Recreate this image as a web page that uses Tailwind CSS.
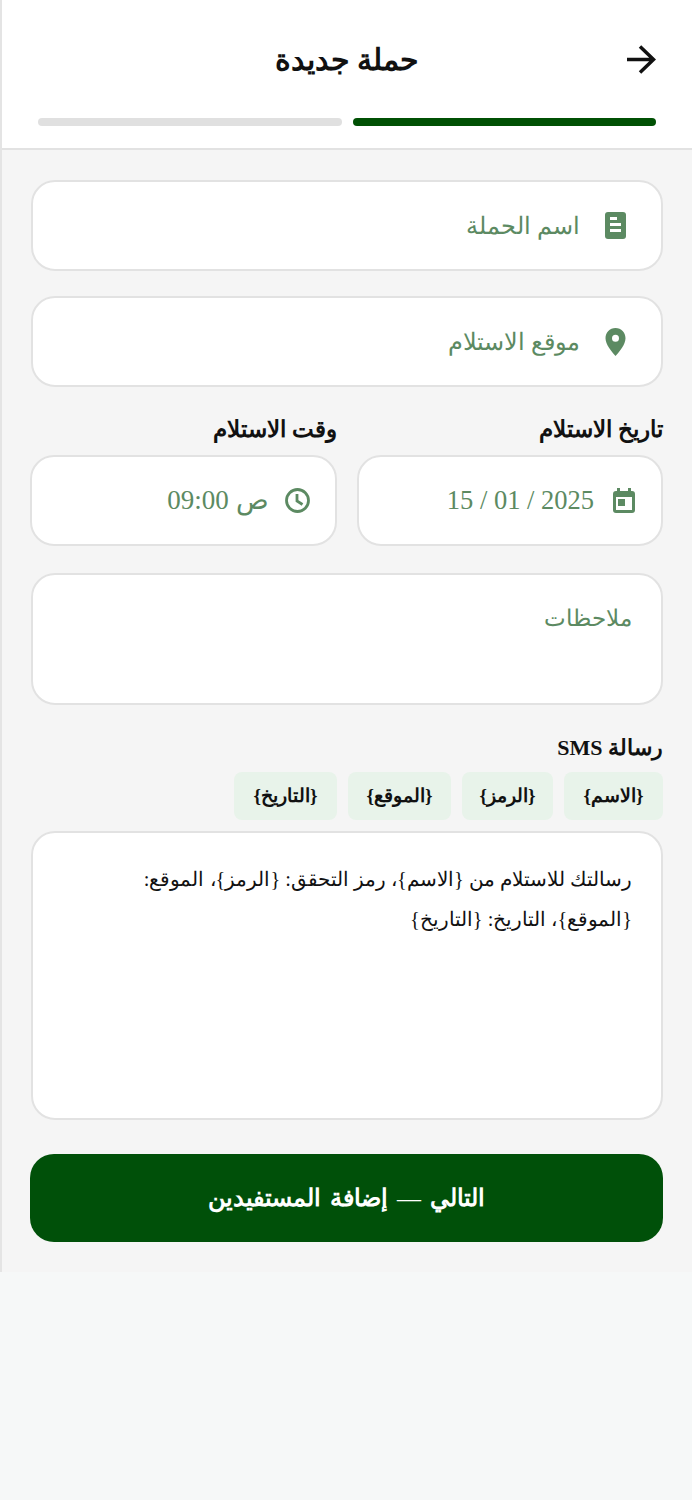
<!DOCTYPE html>
<html lang="ar" dir="rtl">

<head>
    <meta charset="UTF-8" />
    <meta name="viewport" content="width=device-width, initial-scale=1.0" />
    <title>حملة جديدة</title>
    <script src="https://cdn.jsdelivr.net/npm/@tailwindcss/browser@4"></script>
</head>

<body class="bg-[#f6f8f8] min-h-screen font-['Liberation_Serif',serif] text-[#111]">
    <div class="h-[1272px] bg-[#f5f5f5] border-l-2 border-[#e4e4e4]">
        <header class="h-[150px] bg-white border-b-2 border-[#e2e2e2] pt-[36px] px-[36px]">
            <div class="h-[48px] flex items-center justify-center relative">
                <svg class="absolute right-0 top-[9px]" width="32" height="32" viewBox="0 0 32 32" fill="none" stroke="#111" stroke-width="3.500"><path d="M3 14.500h26M16 1.500l13.500 13-13.500 13" /></svg>
                <h1 class="text-[30px] font-bold leading-none">حملة جديدة</h1>
            </div>
            <div class="flex gap-[11px] mt-[34px]">
                <div class="flex-1 h-[8px] rounded-full bg-[#005004]"></div>
                <div class="flex-1 h-[8px] rounded-full bg-[#e0e0e0]"></div>
            </div>
        </header>

        <main class="px-[29px] pt-[30px]">
            <div class="h-[91px] bg-white border-2 border-[#e2e2e2] rounded-[24px] flex items-center pr-[35px] gap-[25px] text-[#5c8a62] text-[24px]">
                <svg width="21" height="27" viewBox="0 0 21 27"><rect width="21" height="27" rx="3" fill="#5c8a62" /><path d="M5 5h7v3H5zM5 11h11v3H5zM5 17h11v3H5z" fill="#fff" /></svg>
                <span>اسم الحملة</span>
            </div>
            <div class="mt-[25px] h-[91px] bg-white border-2 border-[#e2e2e2] rounded-[24px] flex items-center pr-[35px] gap-[25px] text-[#5c8a62] text-[24px]">
                <svg width="21" height="28" viewBox="0 0 21 28"><path fill-rule="evenodd" d="M10.500 0C4.700 0 .5 4.700.5 10.300.5 16.500 6.500 23.500 10.500 28c4-4.500 10-11.500 10-17.700C20.500 4.700 16.300 0 10.500 0zm0 6.800a3.500 3.500 0 1 1 0 7 3.500 3.500 0 0 1 0-7z" fill="#5c8a62" /></svg>
                <span>موقع الاستلام</span>
            </div>

            <div class="grid grid-cols-2 gap-[20px] mt-[28px] -ml-[1px]">
                <div>
                    <label class="block text-[23px] font-bold leading-[30px] mb-[10px]">تاريخ الاستلام</label>
                    <div class="h-[91px] bg-white border-2 border-[#e2e2e2] rounded-[24px] flex items-center pr-[26px] gap-[19px] text-[#5c8a62] text-[26.500px]">
                        <svg width="22" height="25" viewBox="0 0 22 25" fill="#5c8a62"><path fill-rule="evenodd" d="M4 0h3v3h8V0h3v3h1a3 3 0 0 1 3 3v16a3 3 0 0 1-3 3H3a3 3 0 0 1-3-3V6a3 3 0 0 1 3-3h1zM3 9v13h16V9zM5 11h7v7H5z" /></svg>
                        <span dir="ltr">15 / 01 / 2025</span>
                    </div>
                </div>
                <div>
                    <label class="block text-[23px] font-bold leading-[30px] mb-[10px]">وقت الاستلام</label>
                    <div class="h-[91px] bg-white border-2 border-[#e2e2e2] rounded-[24px] flex items-center pr-[25px] gap-[16px] text-[#5c8a62] text-[27px]">
                        <svg width="25" height="25" viewBox="0 0 25 25" fill="none" stroke="#5c8a62" stroke-width="2.800"><circle cx="12.500" cy="12.500" r="11" /><path d="M12 6v7l5.500 3.500" /></svg>
                        <span>ص 09:00</span>
                    </div>
                </div>
            </div>

            <div class="mt-[27px] h-[132px] bg-white border-2 border-[#e2e2e2] rounded-[24px] pt-[24px] pr-[29px] text-[#5c8a62] text-[23px] leading-[40px]">ملاحظات</div>

            <label class="block mt-[27px] text-[22px] font-bold leading-[32px]">رسالة SMS</label>
            <div class="flex gap-[11px] mt-[8px] text-[19px] font-bold">
                <span class="w-[99px] h-[48px] rounded-[8px] bg-[#e8f3ea] flex items-center justify-center">{الاسم}</span>
                <span class="w-[91px] h-[48px] rounded-[8px] bg-[#e8f3ea] flex items-center justify-center">{الرمز}</span>
                <span class="w-[103px] h-[48px] rounded-[8px] bg-[#e8f3ea] flex items-center justify-center">{الموقع}</span>
                <span class="w-[103px] h-[48px] rounded-[8px] bg-[#e8f3ea] flex items-center justify-center">{التاريخ}</span>
            </div>
            <div class="mt-[11px] h-[289px] bg-white border-2 border-[#e2e2e2] rounded-[24px] pt-[26px] pr-[29px] pl-[24px] text-[20.400px] leading-[40px]">رسالتك للاستلام من {الاسم}، رمز التحقق: {الرمز}، الموقع:<br />{الموقع}، التاريخ: {التاريخ}</div>

            <button class="block mt-[34px] -ml-[1px] w-[633px] h-[88px] rounded-[24px] bg-[#005009] text-white text-[24px] font-bold [word-spacing:3px]">التالي <span class="font-normal">—</span> إضافة المستفيدين</button>
        </main>
    </div>
</body>

</html>
